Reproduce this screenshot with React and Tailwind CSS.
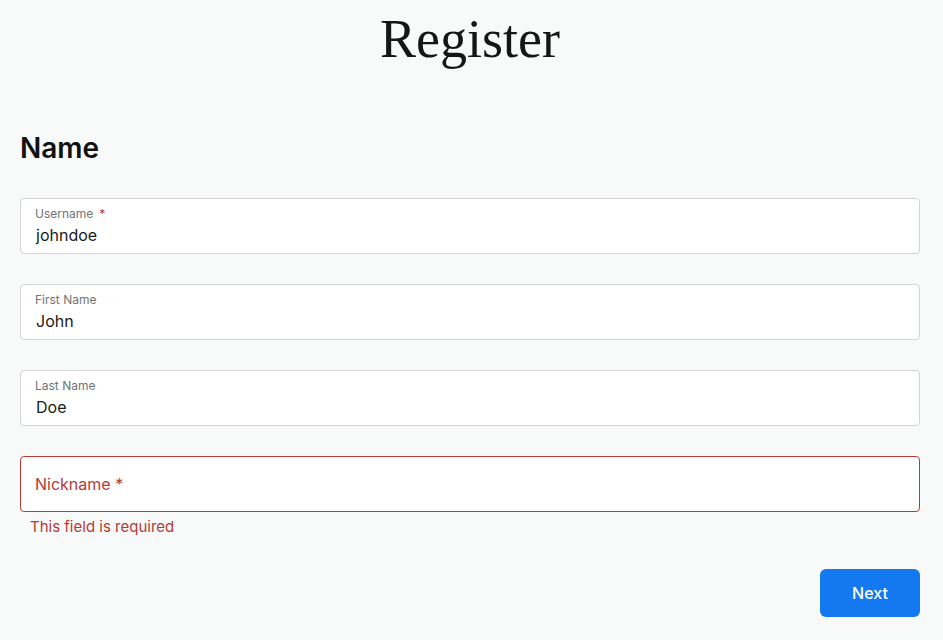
export default function App() {
  const fields = [
    { label: 'Username', value: 'johndoe', required: true },
    { label: 'First Name', value: 'John' },
    { label: 'Last Name', value: 'Doe' },
  ]

  return (
    <div className="min-h-[640px] bg-[#f8f9f9] pl-5 pr-[23px] font-['Inter',sans-serif] text-[#1a1a1a]">
      <h1 className="pt-[7px] text-center font-['Liberation_Serif',serif] text-[54px] leading-[64px] text-[#161616]">
        Register
      </h1>

      <h2 className="mt-[61px] text-[28px] font-semibold leading-[32px] text-[#111]">Name</h2>

      <div className="mt-[34px] flex flex-col gap-[30px]">
        {fields.map(f => (
          <div key={f.label} className="h-14 rounded border border-[#d4d4d4] bg-white px-[14px] pt-[7px]">
            <div className="text-[12px] leading-[16px] text-[#737373]">
              {f.label}
              {f.required && <span className="ml-1.5 text-[#b83a35]">*</span>}
            </div>
            <div className="mt-[2px] pl-px text-[16px] leading-[22px] text-[#1a1a1a]">{f.value}</div>
          </div>
        ))}

        <div>
          <div className="flex h-14 items-center rounded border border-[#b83a35] bg-white px-[14px]">
            <span className="text-[16px] text-[#b83a35]">Nickname *</span>
          </div>
          <p className="mt-[5px] pl-[10px] text-[15px] leading-[20px] text-[#b83a35]">This field is required</p>
        </div>
      </div>

      <div className="mt-[32px] flex justify-end">
        <button className="h-12 w-[100px] rounded-md bg-[#1479f0] text-[16px] font-medium text-white">
          Next
        </button>
      </div>
    </div>
  )
}
